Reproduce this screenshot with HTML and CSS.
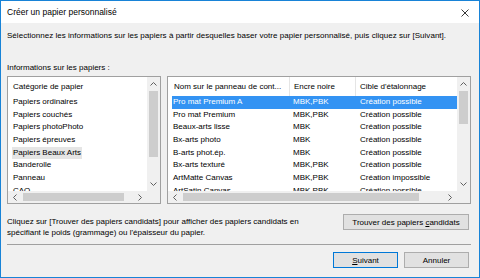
FILE: index.html
```html
<!DOCTYPE html>
<html lang="fr">
<head>
    <meta charset="UTF-8">
    <meta name="viewport" content="width=device-width, initial-scale=1.0">
    <title>Créer un papier personnalisé</title>
    <link rel="stylesheet" href="styles.css">
</head>
<body>
    <div class="dialog">
        <div class="titlebar">
            <span class="title">Créer un papier personnalisé</span>
            <span class="close">
                <svg width="8" height="8" viewBox="0 0 8 8"><path d="M0.5 0.5 L7.5 7.5 M7.5 0.5 L0.5 7.5" stroke="#222" stroke-width="0.9" fill="none"/></svg>
            </span>
        </div>

        <div class="content">
            <p class="intro">Sélectionnez les informations sur les papiers à partir desquelles baser votre papier personnalisé, puis cliquez sur [Suivant].</p>
            <p class="label">Informations sur les papiers :</p>

            <div class="lists">
                <!-- Liste des catégories -->
                <div class="listbox categories">
                    <div class="view">
                        <div class="head"><span class="cell">Catégorie de papier</span></div>
                        <div class="rows">
                            <div class="item"><span>Papiers ordinaires</span></div>
                            <div class="item"><span>Papiers couchés</span></div>
                            <div class="item"><span>Papiers photoPhoto</span></div>
                            <div class="item"><span>Papiers épreuves</span></div>
                            <div class="item inactive"><span>Papiers Beaux Arts</span></div>
                            <div class="item"><span>Banderolle</span></div>
                            <div class="item"><span>Panneau</span></div>
                            <div class="item"><span>CAO</span></div>
                        </div>
                    </div>
                    <div class="vscroll">
                        <div class="arrow"><svg width="7" height="4" viewBox="0 0 7 4"><path d="M0.5 3.5 L3.5 0.5 L6.5 3.5" stroke="#606060" fill="none"/></svg></div>
                        <div class="track"><div class="thumb thumb-cat"></div></div>
                        <div class="arrow"><svg width="7" height="4" viewBox="0 0 7 4"><path d="M0.5 0.5 L3.5 3.5 L6.5 0.5" stroke="#606060" fill="none"/></svg></div>
                    </div>
                    <div class="hscroll">
                        <div class="arrow"><svg width="4" height="7" viewBox="0 0 4 7"><path d="M3.5 0.5 L0.5 3.5 L3.5 6.5" stroke="#606060" fill="none"/></svg></div>
                        <div class="track"><div class="thumb hthumb-cat"></div></div>
                        <div class="arrow"><svg width="4" height="7" viewBox="0 0 4 7"><path d="M0.5 0.5 L3.5 3.5 L0.5 6.5" stroke="#606060" fill="none"/></svg></div>
                    </div>
                    <div class="corner"></div>
                </div>

                <!-- Liste des papiers -->
                <div class="listbox papers">
                    <div class="view">
                        <div class="head">
                            <span class="cell col-name">Nom sur le panneau de cont...</span>
                            <span class="cell col-ink">Encre noire</span>
                            <span class="cell col-target">Cible d'étalonnage</span>
                        </div>
                        <div class="rows">
                            <div class="row selected"><span class="col-name">Pro mat Premium A</span><span class="col-ink">MBK,PBK</span><span class="col-target">Création possible</span></div>
                            <div class="row"><span class="col-name">Pro mat Premium</span><span class="col-ink">MBK,PBK</span><span class="col-target">Création possible</span></div>
                            <div class="row"><span class="col-name">Beaux-arts lisse</span><span class="col-ink">MBK</span><span class="col-target">Création possible</span></div>
                            <div class="row"><span class="col-name">Bx-arts photo</span><span class="col-ink">MBK</span><span class="col-target">Création possible</span></div>
                            <div class="row"><span class="col-name">B-arts phot.ép.</span><span class="col-ink">MBK</span><span class="col-target">Création possible</span></div>
                            <div class="row"><span class="col-name">Bx-arts texturé</span><span class="col-ink">MBK,PBK</span><span class="col-target">Création possible</span></div>
                            <div class="row"><span class="col-name">ArtMatte Canvas</span><span class="col-ink">MBK,PBK</span><span class="col-target">Création impossible</span></div>
                            <div class="row"><span class="col-name">ArtSatin Canvas</span><span class="col-ink">MBK,PBK</span><span class="col-target">Création possible</span></div>
                        </div>
                    </div>
                    <div class="vscroll">
                        <div class="arrow"><svg width="7" height="4" viewBox="0 0 7 4"><path d="M0.5 3.5 L3.5 0.5 L6.5 3.5" stroke="#606060" fill="none"/></svg></div>
                        <div class="track"><div class="thumb thumb-papers"></div></div>
                        <div class="arrow"><svg width="7" height="4" viewBox="0 0 7 4"><path d="M0.5 0.5 L3.5 3.5 L6.5 0.5" stroke="#606060" fill="none"/></svg></div>
                    </div>
                    <div class="hscroll">
                        <div class="arrow"><svg width="4" height="7" viewBox="0 0 4 7"><path d="M3.5 0.5 L0.5 3.5 L3.5 6.5" stroke="#606060" fill="none"/></svg></div>
                        <div class="track"><div class="thumb hthumb-papers"></div></div>
                        <div class="arrow"><svg width="4" height="7" viewBox="0 0 4 7"><path d="M0.5 0.5 L3.5 3.5 L0.5 6.5" stroke="#606060" fill="none"/></svg></div>
                    </div>
                    <div class="corner"></div>
                </div>
            </div>

            <div class="find">
                <p class="hint">Cliquez sur [Trouver des papiers candidats] pour afficher des papiers candidats en spécifiant le poids (grammage) ou l'épaisseur du papier.</p>
                <button class="btn btn-find">Trouver des papiers <u>c</u>andidats</button>
            </div>

            <div class="separator"></div>

            <div class="actions">
                <button class="btn btn-default"><u>S</u>uivant</button>
                <button class="btn">Annuler</button>
            </div>
        </div>
    </div>
</body>
</html>
```

FILE: styles.css
```css
/* Remise à zéro */
* {
    margin: 0;
    padding: 0;
    box-sizing: border-box;
}

body {
    font-family: "Liberation Sans", Arial, sans-serif;
    font-size: 8px;
    line-height: 11px;
    color: #000;
    background: #fff;
}

/* Fenêtre */
.dialog {
    width: 480px;
    height: 278px;
    border: 1px solid #1883d7;
    display: flex;
    flex-direction: column;
    background: #f0f0f0;
}

.titlebar {
    height: 22px;
    background: #fff;
    display: flex;
    align-items: center;
    justify-content: space-between;
    padding: 1px 8px 0 6px;
    font-size: 8.5px;
}

.close {
    display: flex;
    margin-right: 2px;
}

.content {
    flex: 1;
    padding: 7px 8px 0 6px;
    display: flex;
    flex-direction: column;
}

.intro {
    white-space: nowrap;
    letter-spacing: 0.03px;
}

.label {
    margin-top: 21px;
}

/* Listes */
.lists {
    display: flex;
    gap: 6px;
    margin-top: 3px;
    height: 128px;
}

.listbox {
    border: 1px solid #a0a0a0;
    background: #fff;
    display: grid;
    grid-template-columns: 1fr 13px;
    grid-template-rows: 1fr 12px;
    overflow: hidden;
}

.categories {
    width: 154px;
}

.papers {
    flex: 1;
}

.view {
    overflow: hidden;
    min-width: 0;
}

.head {
    height: 19px;
    display: flex;
    align-items: center;
}

.categories .head .cell {
    padding-left: 5px;
}

.rows {
    padding-left: 4px;
}

.item,
.row {
    height: 12.67px;
    line-height: 12.67px;
    white-space: nowrap;
}

.item span {
    padding: 0 1px;
    display: inline-block;
}

.item.inactive span {
    background: #e5e5e5;
}

.row {
    display: flex;
}

.row.selected {
    background: #3393f3;
    color: #fff;
}

.col-name {
    width: 117px;
    padding-left: 1px;
}

.col-ink {
    width: 67px;
    padding-left: 4px;
}

.col-target {
    flex: 1;
    padding-left: 4px;
}

.head .col-name {
    width: 122px;
    padding-left: 6px;
    border-right: 1px solid #e5e5e5;
    height: 19px;
    line-height: 19px;
}

.head .col-ink {
    width: 66px;
    padding-left: 4px;
    border-right: 1px solid #e5e5e5;
    height: 19px;
    line-height: 19px;
}

.head .col-target {
    padding-left: 4px;
}

/* Barres de défilement */
.vscroll {
    background: #f0f0f0;
    display: flex;
    flex-direction: column;
}

.hscroll {
    background: #f0f0f0;
    display: flex;
}

.arrow {
    flex: 0 0 14px;
    display: flex;
    align-items: center;
    justify-content: center;
}

.vscroll .track {
    flex: 1;
    padding: 0 2px;
}

.hscroll .track {
    flex: 1;
    padding: 2px 0;
}

.thumb {
    background: #cdcdcd;
}

.thumb-cat {
    height: 66px;
}

.thumb-papers {
    height: 33px;
}

.hthumb-cat {
    width: 101px;
    height: 100%;
    margin-left: 1px;
}

.hthumb-papers {
    width: 236px;
    height: 100%;
    margin-left: 1px;
}

.corner {
    background: #f0f0f0;
}

/* Zone de recherche */
.find {
    display: flex;
    justify-content: space-between;
    align-items: flex-start;
    margin-top: 12px;
}

.hint {
    width: 322px;
}

.btn {
    font-family: inherit;
    font-size: 8px;
    color: #000;
    background: #e1e1e1;
    border: 1px solid #adadad;
    height: 16px;
    cursor: pointer;
}

.btn-find {
    width: 126px;
    margin-top: -2px;
    margin-right: 2px;
}

.separator {
    border-top: 1px solid #a0a0a0;
    margin-top: 6px;
}

/* Boutons du bas */
.actions {
    display: flex;
    justify-content: flex-end;
    gap: 6px;
    margin-top: 7px;
    margin-right: 2px;
}

.actions .btn {
    width: 65px;
}

.btn-default {
    border-color: #0078d7;
}
```
